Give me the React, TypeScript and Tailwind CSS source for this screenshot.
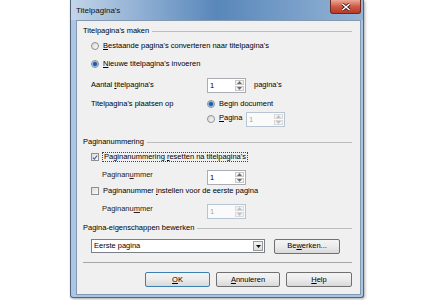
import React from "react";

function U({ children }: { children: React.ReactNode }) {
  return <span className="underline underline-offset-1">{children}</span>;
}

function Radio({ checked }: { checked?: boolean }) {
  return (
    <span className="w-[8px] h-[8px] shrink-0 rounded-full border border-[#8e8f8f] bg-linear-to-br from-[#d8d8d8] to-[#fbfbfb] flex items-center justify-center">
      {checked && <span className="w-[4px] h-[4px] rounded-full bg-[#1d5a9f] ring-1 ring-[#7fb0de]" />}
    </span>
  );
}

function Check({ checked }: { checked?: boolean }) {
  return (
    <span className="w-[8px] h-[8px] shrink-0 border border-[#8e8f8f] bg-linear-to-br from-[#dcdcdc] to-[#fbfbfb] flex items-center justify-center">
      {checked && (
        <svg width="7" height="7" viewBox="0 0 7 7">
          <path d="M1 3.6 L2.8 5.4 L6 1.2" fill="none" stroke="#4a5f97" strokeWidth="1.3" />
        </svg>
      )}
    </span>
  );
}

function Spin({ disabled }: { disabled?: boolean }) {
  return (
    <div
      className={`w-[39px] h-[15px] shrink-0 flex border ${
        disabled ? "border-[#b7c5d3] bg-[#fafafa] text-[#a6a6a6]" : "border-[#abadb3] bg-white text-black"
      }`}
    >
      <span className="flex-1 pl-[2px] leading-[13px]">1</span>
      <div className="w-[9px] m-[1px] flex flex-col gap-px">
        <span className={`flex-1 flex items-center justify-center border ${disabled ? "border-[#dadada]" : "border-[#c9c9c9]"} bg-[#f3f3f3]`}>
          <svg width="5" height="3" viewBox="0 0 5 3">
            <path d="M0 3 L2.5 0 L5 3 Z" fill={disabled ? "#c0c0c0" : "#6d6d6d"} />
          </svg>
        </span>
        <span className={`flex-1 flex items-center justify-center border ${disabled ? "border-[#dadada]" : "border-[#c9c9c9]"} bg-[#f3f3f3]`}>
          <svg width="5" height="3" viewBox="0 0 5 3">
            <path d="M0 0 L2.5 3 L5 0 Z" fill={disabled ? "#c0c0c0" : "#6d6d6d"} />
          </svg>
        </span>
      </div>
    </div>
  );
}

function Header({ text }: { text: string }) {
  return (
    <div className="h-[16px] flex items-center gap-[3px]">
      <span>{text}</span>
      <span className="flex-1 h-px bg-[#bdbdbd]" />
    </div>
  );
}

function Button({ children, def, w }: { children: React.ReactNode; def?: boolean; w: string }) {
  return (
    <button
      className={`${w} h-[15px] rounded-[2px] border ${
        def ? "border-[#3c7fb1]" : "border-[#707070]"
      } bg-linear-to-b from-[#f4f4f4] via-[#ebebeb] to-[#d9d9d9] flex items-center justify-center leading-none`}
    >
      {children}
    </button>
  );
}

export default function App() {
  return (
    <div className="w-[435px] h-[300px] bg-white font-['Liberation_Sans',Arial,sans-serif] text-[7.5px] text-black">
      <div className="ml-[70px] w-[294px] flex flex-col border border-t-0 border-[#52647a] bg-[#aac6e4] rounded-b-[3px] shadow-[1px_1px_3px_rgba(0,0,0,0.35)]">
        <div className="h-[20px] flex items-start justify-between bg-linear-to-r from-[#c3d5e9] via-[#5887ba] to-[#95b4d5] pl-[5px] pr-[2px]">
          <span className="text-[8px] mt-[5px] text-[#111]">Titelpagina's</span>
          <div className="w-[31px] h-[14px] rounded-b-[3px] border border-t-0 border-[#6e2a21] bg-linear-to-b from-[#e9a899] via-[#cf5a45] to-[#b63a27] flex items-center justify-center">
            <svg width="10" height="8" viewBox="0 0 10 8">
              <path d="M1.5 1 L8.5 7 M8.5 1 L1.5 7" stroke="#3a1510" strokeWidth="3" />
              <path d="M1.5 1 L8.5 7 M8.5 1 L1.5 7" stroke="#ffffff" strokeWidth="1.6" />
            </svg>
          </div>
        </div>
        <div className="ml-[5px] mr-[2px] mb-[2px] border border-[#8499af] bg-[#f0f0f0] pl-[6px] pr-[8px] pt-[2px] pb-[7px] flex flex-col">
          <Header text="Titelpagina's maken" />
          <div className="h-[14px] ml-[8px] flex items-center gap-[4px]">
            <Radio />
            <span>
              <U>B</U>estaande pagina's converteren naar titelpagina's
            </span>
          </div>
          <div className="h-[22px] ml-[8px] flex items-center gap-[4px]">
            <Radio checked />
            <span>
              <U>N</U>ieuwe titelpagina's invoeren
            </span>
          </div>
          <div className="h-[21px] ml-[8px] flex items-center">
            <span className="w-[116px] pb-[2px]">
              Aantal <U>t</U>itelpagina's
            </span>
            <Spin />
            <span className="ml-[8px] pb-[2px]">pagina's</span>
          </div>
          <div className="h-[16px] ml-[8px] flex items-center">
            <span className="w-[116px]">Titelpagina's plaatsen op</span>
            <Radio checked />
            <span className="ml-[4px]">Begin document</span>
          </div>
          <div className="h-[14px] ml-[124px] flex items-center">
            <Radio />
            <span className="ml-[4px] w-[27px] pb-[3px]">
              <U>P</U>agina
            </span>
            <Spin disabled />
          </div>

          <div className="mt-[8px]">
            <Header text="Paginanummering" />
          </div>
          <div className="h-[14px] ml-[8px] flex items-center gap-[3px]">
            <Check checked />
            <span className="border border-dotted border-[#444] px-px leading-[8px]">
              Paginanummering <U>r</U>esetten na titelpagina's
            </span>
          </div>
          <div className="h-[14px] mt-[6px] ml-[19px] flex items-center">
            <span className="w-[105px] pb-[5px] text-[#222]">
              Paginan<U>u</U>mmer
            </span>
            <Spin />
          </div>
          <div className="h-[14px] ml-[8px] flex items-center gap-[4px]">
            <Check />
            <span>
              Paginanummer <U>i</U>nstellen voor de eerste pagina
            </span>
          </div>
          <div className="h-[14px] mt-[6px] ml-[19px] flex items-center">
            <span className="w-[105px] pb-[5px] text-[#222]">
              Paginanu<U>m</U>mer
            </span>
            <Spin disabled />
          </div>

          <div className="mt-[2px]">
            <Header text="Pagina-eigenschappen bewerken" />
          </div>
          <div className="h-[14px] mt-[3px] ml-[8px] flex items-center gap-[9px]">
            <div className="w-[174px] h-[14px] flex border border-[#7a7f88] bg-white">
              <span className="flex-1 pl-[2px] leading-[12px]">Eerste pagina</span>
              <span className="w-[10px] m-px border border-[#9a9a9a] bg-linear-to-b from-[#f4f4f4] to-[#dcdcdc] flex items-center justify-center">
                <svg width="5" height="3" viewBox="0 0 5 3">
                  <path d="M0 0 L2.5 3 L5 0 Z" fill="#111" />
                </svg>
              </span>
            </div>
            <Button w="w-[66px]">
              <span>
                Be<U>w</U>erken...
              </span>
            </Button>
          </div>
          <div className="mt-[9px] h-px bg-[#a6a6a6]" />
          <div className="mt-[9px] flex justify-end gap-[6px]">
            <Button w="w-[65px]" def>
              <span>
                <U>O</U>K
              </span>
            </Button>
            <Button w="w-[64px]">
              <span>
                <U>A</U>nnuleren
              </span>
            </Button>
            <Button w="w-[66px]">
              <span>
                <U>H</U>elp
              </span>
            </Button>
          </div>
        </div>
      </div>
    </div>
  );
}
